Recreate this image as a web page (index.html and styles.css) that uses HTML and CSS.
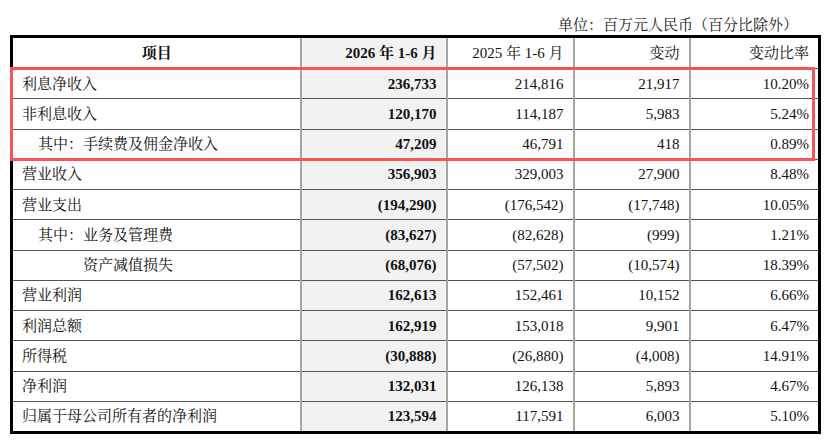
FILE: index.html
```html
<!DOCTYPE html>
<html lang="zh-CN">
<head>
<meta charset="utf-8">
<title>利润表摘要</title>
<link rel="stylesheet" href="styles.css">
</head>
<body>
<div class="page">
  <div class="unit">单位：百万元人民币（百分比除外）</div>
  <div class="table-wrap">
    <table class="fin">
      <colgroup>
        <col class="c1"><col class="c2"><col class="c3"><col class="c4"><col class="c5">
      </colgroup>
      <thead>
        <tr>
          <th class="item">项目</th>
          <th class="cur">2026 年 1-6 月</th>
          <th class="plain">2025 年 1-6 月</th>
          <th class="plain">变动</th>
          <th class="plain">变动比率</th>
        </tr>
      </thead>
      <tbody>
        <tr><td>利息净收入</td><td class="cur">236,733</td><td>214,816</td><td>21,917</td><td>10.20%</td></tr>
        <tr><td>非利息收入</td><td class="cur">120,170</td><td>114,187</td><td>5,983</td><td>5.24%</td></tr>
        <tr><td class="ind1">其中：手续费及佣金净收入</td><td class="cur">47,209</td><td>46,791</td><td>418</td><td>0.89%</td></tr>
        <tr><td>营业收入</td><td class="cur">356,903</td><td>329,003</td><td>27,900</td><td>8.48%</td></tr>
        <tr><td>营业支出</td><td class="cur">(194,290)</td><td>(176,542)</td><td>(17,748)</td><td>10.05%</td></tr>
        <tr><td class="ind1">其中：业务及管理费</td><td class="cur">(83,627)</td><td>(82,628)</td><td>(999)</td><td>1.21%</td></tr>
        <tr><td class="ind2">资产减值损失</td><td class="cur">(68,076)</td><td>(57,502)</td><td>(10,574)</td><td>18.39%</td></tr>
        <tr><td>营业利润</td><td class="cur">162,613</td><td>152,461</td><td>10,152</td><td>6.66%</td></tr>
        <tr><td>利润总额</td><td class="cur">162,919</td><td>153,018</td><td>9,901</td><td>6.47%</td></tr>
        <tr><td>所得税</td><td class="cur">(30,888)</td><td>(26,880)</td><td>(4,008)</td><td>14.91%</td></tr>
        <tr><td>净利润</td><td class="cur">132,031</td><td>126,138</td><td>5,893</td><td>4.67%</td></tr>
        <tr><td>归属于母公司所有者的净利润</td><td class="cur">123,594</td><td>117,591</td><td>6,003</td><td>5.10%</td></tr>
      </tbody>
    </table>
    <div class="highlight"></div>
  </div>
</div>
</body>
</html>
```

FILE: styles.css
```css
html, body {
  margin: 0;
  padding: 0;
  background: #ffffff;
}

body {
  font-family: "Liberation Serif", "Noto Serif CJK SC", "Noto Sans CJK SC", serif;
  color: #111111;
  font-size: 15px;
}

.page {
  width: 830px;
  height: 443px;
  padding-top: 16px;
  box-sizing: border-box;
}

.unit {
  text-align: right;
  padding-right: 32px;
  line-height: 19px;
  height: 19px;
  color: #222222;
}

.table-wrap {
  position: relative;
  margin-left: 10px;
  width: 808px;
}

.fin {
  width: 808px;
  border-collapse: collapse;
  table-layout: fixed;
  border: 3px solid #000000;
}

.c1 { width: 289px; }
.c2 { width: 146px; }
.c3 { width: 127px; }
.c4 { width: 116px; }
.c5 { width: 130px; }

.fin th,
.fin td {
  height: 29.25px;
  padding: 0 9px 0 10px;
  border-left: 2px solid #a6a6a6;
  border-right: 2px solid #a6a6a6;
  border-bottom: 1px solid #555555;
  text-align: right;
  white-space: nowrap;
  vertical-align: middle;
  line-height: 18px;
}

.fin thead th {
  height: 30px;
  font-weight: normal;
}

.fin th.item {
  text-align: center;
  font-weight: bold;
}

.fin th.cur {
  font-weight: bold;
}

.fin td:first-child {
  text-align: left;
  padding-left: 9px;
}

.fin td.ind1 {
  padding-left: 25px;
}

.fin td.ind2 {
  padding-left: 70px;
}

.fin .cur {
  background: #f2f2f2;
  font-weight: bold;
}

.highlight {
  position: absolute;
  left: 0;
  top: 32px;
  width: 805px;
  height: 94px;
  border: 3px solid #f25656;
  box-sizing: border-box;
  pointer-events: none;
}
```
